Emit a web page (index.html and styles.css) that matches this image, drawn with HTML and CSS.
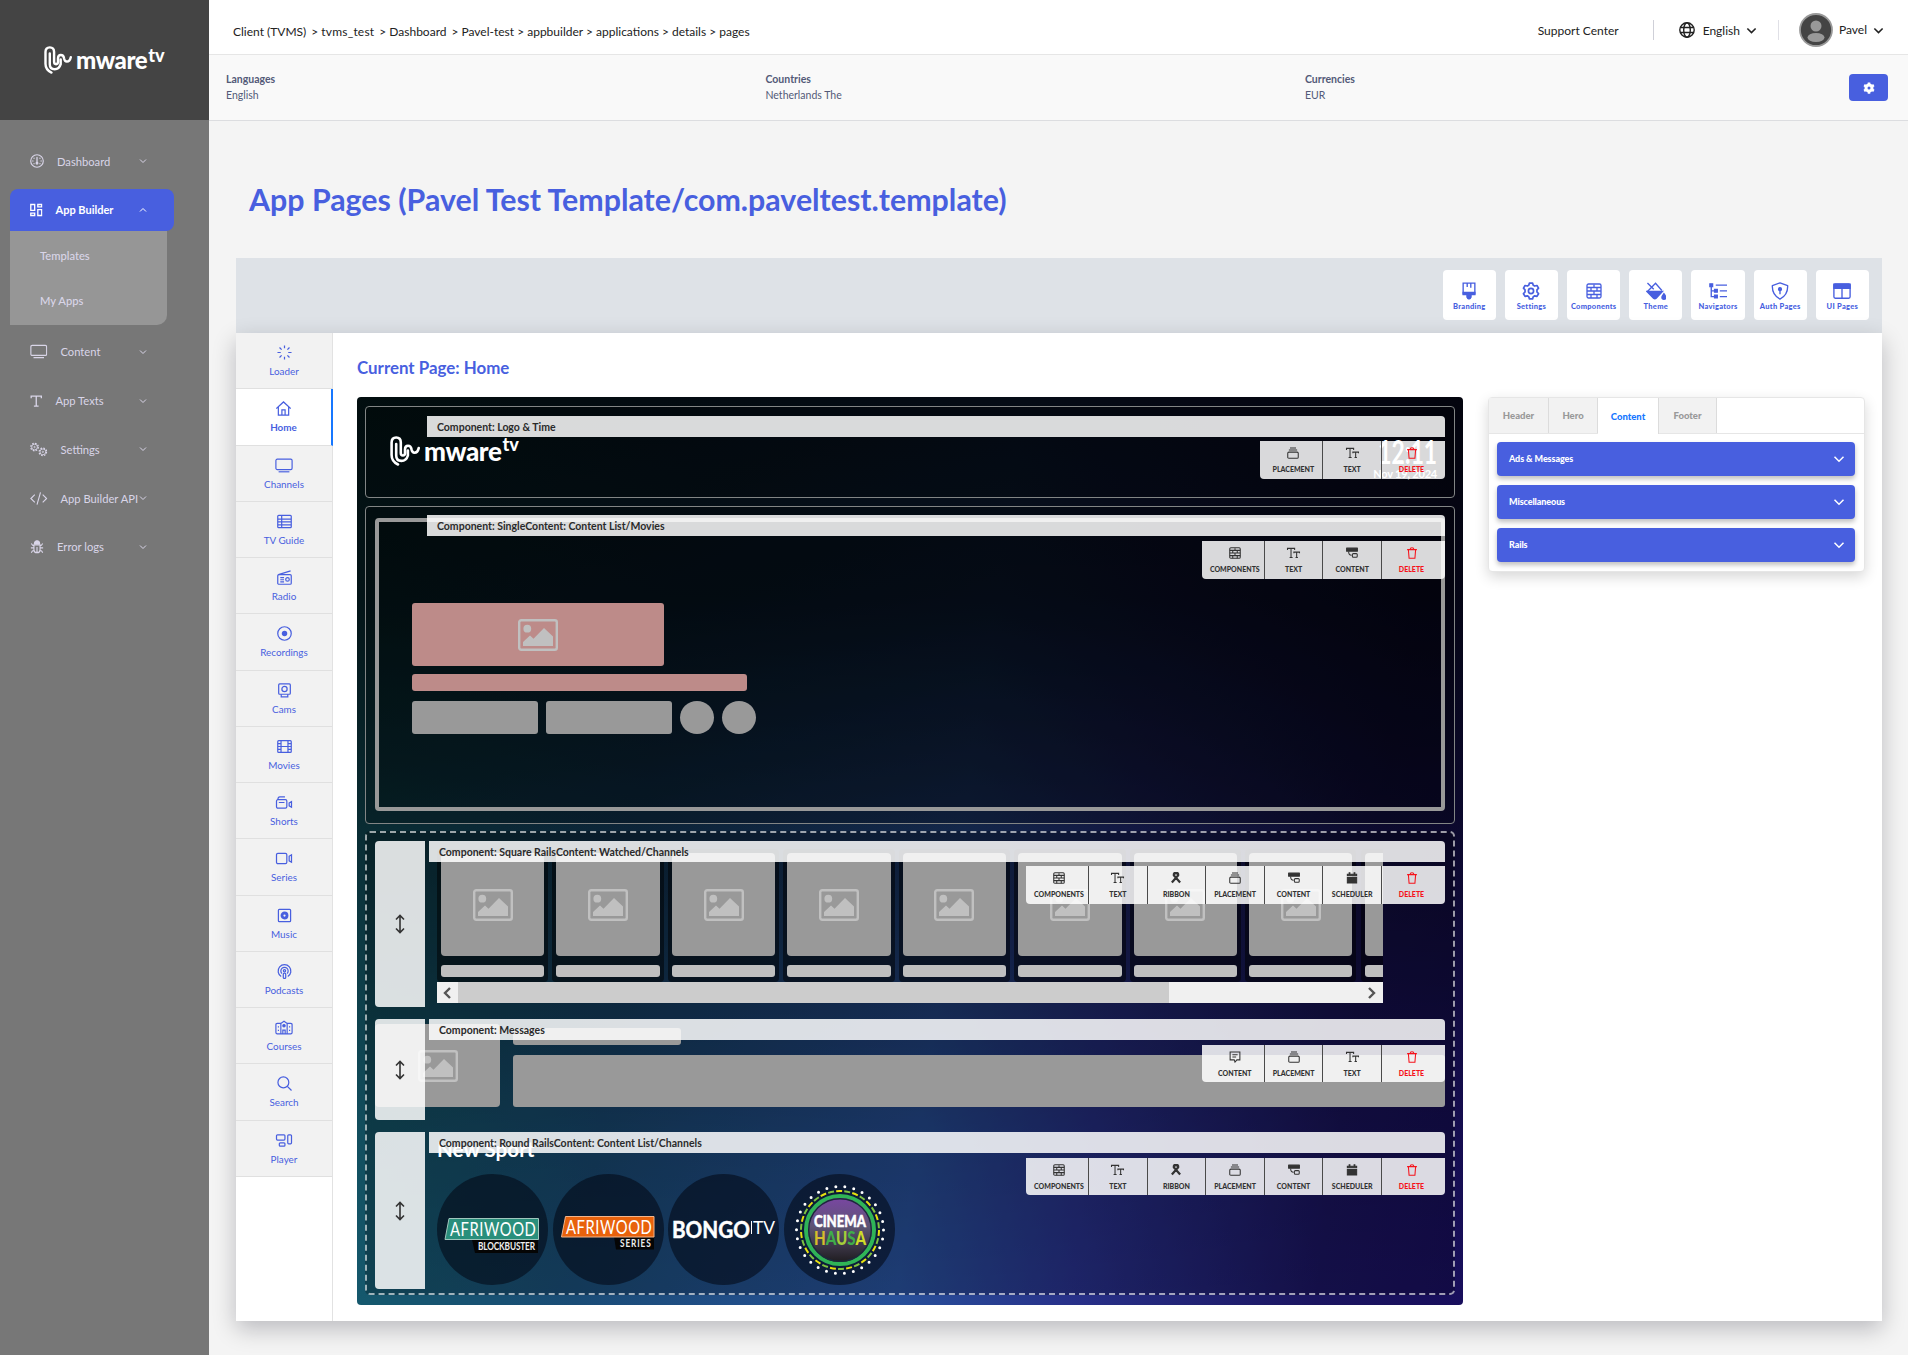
FILE: index.html
```html
<!DOCTYPE html>
<html lang="en">
<head>
<meta charset="utf-8">
<title>App Pages</title>
<link rel="stylesheet" href="styles.css">
</head>
<body>
<svg class="sprite" xmlns="http://www.w3.org/2000/svg">
  <symbol id="down" viewBox="0 0 16 16"><path d="M2 5l6 6 6-6"/></symbol>
  <symbol id="up" viewBox="0 0 16 16"><path d="M2 11l6-6 6 6"/></symbol>
  <symbol id="gauge" viewBox="0 0 16 16"><circle cx="8" cy="8" r="7.200"/><path d="M8 4v6M4.600 4.800v.1M11.400 4.800v.1M3.300 8v.1M12.700 8v.1M4.600 11v.1M11.400 11v.1" stroke-linecap="round" stroke-width="1.500"/><circle cx="8" cy="10.500" r="1" class="fill"/></symbol>
  <symbol id="grid" viewBox="0 0 16 16"><path d="M1 1h5v7.500h-5zM10 1h5v3h-5zM1 12h5v3h-5zM10 7.500h5v7.500h-5z"/></symbol>
  <symbol id="tv" viewBox="0 0 20 16"><rect x="1" y="1" width="18" height="11.500" rx="1.500"/><path d="M4 15h12"/></symbol>
  <symbol id="tee" viewBox="0 0 16 16"><path d="M1.500 4.500v-2.800h13v2.800M8 2v12.500M5 14.500h6"/></symbol>
  <symbol id="gear" viewBox="0 0 16 16"><circle cx="8" cy="8" r="2.300"/><path d="M6.600 1h2.800l.6 1.900 1.300.7 2-.5 1.400 2.400-1.400 1.500v1.900l1.400 1.500-1.400 2.400-2-.5-1.300.8-.6 1.900h-2.800l-.6-1.900-1.300-.8-2 .5-1.400-2.400 1.400-1.500v-1.900l-1.400-1.500 1.400-2.400 2 .5 1.300-.7z" stroke-linejoin="round"/></symbol>
  <symbol id="gears" viewBox="0 0 20 16"><circle cx="5.200" cy="5.200" r="4.300" stroke-dasharray="1.900 1.480" stroke-width="1.400"/><circle cx="5.200" cy="5.200" r="3.300" stroke-width="1"/><circle cx="5.200" cy="5.200" r=".8" stroke-width=".9"/><circle cx="14.700" cy="10.700" r="4.300" stroke-dasharray="1.900 1.480" stroke-width="1.400"/><circle cx="14.700" cy="10.700" r="3.300" stroke-width="1"/><circle cx="14.700" cy="10.700" r=".8" stroke-width=".9"/></symbol>
  <symbol id="code" viewBox="0 0 20 16"><path d="M5.500 3.500l-4.500 4.500 4.500 4.500M14.500 3.500l4.500 4.500-4.500 4.500M12 1l-4 14"/></symbol>
  <symbol id="bug" viewBox="0 0 16 16"><path d="M4.500 5.500h7v5.500a3.500 3.500 0 0 1-7 0zM8 8v6M1 9h3.500M11.500 9h3.500M1.500 4l1.500 2 1.500.5M14.500 4l-1.500 2-1.500.5M1.500 14.500l1.200-2 2-.5M14.500 14.500l-1.200-2-2-.5"/><path d="M5 4.500a3 3.600 0 0 1 6 0z" class="fill"/></symbol>
  <symbol id="globe" viewBox="0 0 16 16"><circle cx="8" cy="8" r="7.200"/><ellipse cx="8" cy="8" rx="3.300" ry="7.200"/><path d="M1.200 5.500h13.600M1.200 10.500h13.600"/></symbol>
  <symbol id="cog" viewBox="0 0 16 16"><circle cx="8" cy="8" r="4" stroke-width="4"/><path d="M8 0.500v3M8 12.500v3M1.500 4.200l2.600 1.500M11.900 10.300l2.600 1.500M1.500 11.800l2.600-1.500M11.900 5.700l2.600-1.500" stroke-width="3.400"/></symbol>
  <symbol id="brush" viewBox="0 0 20 20"><path d="M3.500 1.200h13v11.800h-4.500v3.500a2 2 0 0 1-4 0v-3.500h-4.500zM8 1.500v4M12 1.500v5"/><path d="M3.500 11.500h13v2.500h-13zM8 13h4v4q-2 3.500-4 0z" class="fill"/></symbol>
  <symbol id="wall" viewBox="0 0 16 16"><rect x="1" y="1" width="14" height="14" rx="1.500"/><path d="M1 4.500h14M1 8h14M1 11.500h14M8 1.500v3M5 4.500v3.500M11 4.500v3.500M8 8v3.500M5 11.500v3.500M11 11.500v3.500"/></symbol>
  <symbol id="fill" viewBox="0 0 22 20"><path d="M1.500 1l7 7M1.500 10.500l9-9 7 8"/><path d="M.8 10.500h17.400l-7 7.500a2.500 2.500 0 0 1-3 0zM19.800 13q2.200 3 2.200 4a2.200 2.200 0 0 1-4.400 0q0-1 2.200-4z" class="fill"/></symbol>
  <symbol id="tree" viewBox="0 0 20 20"><path d="M2.500 3v13.200h5M2.500 9.800h5M7.500 3.500h12.500M12 9.800h8M12 16.200h8"/><path d="M1 2h3v3h-3zM6.200 8.300h3v3h-3zM6.200 14.700h3v3h-3z" class="fill"/></symbol>
  <symbol id="shield" viewBox="0 0 20 20"><path d="M10 1l8.500 3q.5 10.500-8.500 15q-9-4.500-8.500-15zM10 8v5.500" stroke-linejoin="round"/><circle cx="10" cy="8" r="1.600" class="fill"/></symbol>
  <symbol id="layout" viewBox="0 0 20 18"><rect x="1" y="1" width="18" height="16" rx="1.500"/><path d="M10 5v12"/><path d="M1 1.500h18v4.500h-18z" class="fill"/></symbol>
  <symbol id="spin" viewBox="0 0 16 16"><path d="M8 .5v3M8 12.500v3M.5 8h3.500M12 8h3.500M2.700 2.700l2.200 2.200M11.100 11.100l2.200 2.200M2.700 13.300l2.200-2.200M11.100 4.900l2.200-2.200"/></symbol>
  <symbol id="home" viewBox="0 0 16 16"><path d="M.3 8l7.700-7 7.700 7M2.500 6.500v8.500h11v-8.500M6.300 15v-5.500h3.400v5.500"/></symbol>
  <symbol id="guide" viewBox="0 0 16 16"><rect x=".8" y="1.500" width="14.400" height="13" rx="1"/><path d="M1 5.500h14M1 8.500h14M1 11.500h14M5 1.500v13"/></symbol>
  <symbol id="radio" viewBox="0 0 16 16"><rect x=".8" y="5" width="14.400" height="10.200" rx="1.200"/><path d="M1.500 5l13-4M3.500 8.200h4M3.500 10.400h4M3.500 12.600h4"/><circle cx="11.200" cy="10" r="1.900"/></symbol>
  <symbol id="rec" viewBox="0 0 16 16"><circle cx="8" cy="8" r="7.200"/><circle cx="8" cy="8" r="2.300" class="fill"/></symbol>
  <symbol id="cam" viewBox="0 0 16 16"><rect x="1.800" y="1" width="12.400" height="11" rx="1"/><circle cx="8" cy="6.500" r="2.800"/><path d="M4.500 12v2.800h7v-2.800"/></symbol>
  <symbol id="film" viewBox="0 0 16 16"><rect x=".8" y="1.800" width="14.400" height="12.400" rx="1"/><path d="M4.300 2v12M11.700 2v12M4.300 8h7.400M1 5h3.300M1 8h3.300M1 11h3.300M11.700 5h3.300M11.700 8h3.300M11.700 11h3.300"/></symbol>
  <symbol id="shorts" viewBox="0 0 18 16"><rect x="1" y="5" width="11" height="9" rx="1.500"/><path d="M2.500 5q0-3 2-3h5.500M3.500 8h6M14.500 8.500l2.500-1.500v6l-2.500-1.500z"/></symbol>
  <symbol id="series" viewBox="0 0 18 16"><rect x="1" y="2.500" width="11" height="11" rx="1.500"/><path d="M14.500 5.500l2.500-1.500v8l-2.500-1.500z"/></symbol>
  <symbol id="music" viewBox="0 0 16 16"><rect x="1.500" y="1.500" width="13" height="13" rx="1"/><circle cx="8" cy="8" r="2.700" stroke-width="3"/></symbol>
  <symbol id="pod" viewBox="0 0 16 16"><path d="M4.500 13.300a6.800 6.800 0 1 1 7 0M5.300 10.200a3.900 3.900 0 1 1 5.400 0"/><circle cx="8" cy="7.200" r="1.200"/><rect x="6.700" y="9.800" width="2.600" height="5.500" rx="1"/></symbol>
  <symbol id="school" viewBox="0 0 20 16"><path d="M6.500 3.500h-4q-1.500 0-1.500 1.500v8.500q0 1.500 1.500 1.500h15q1.500 0 1.500-1.500v-8.500q0-1.500-1.500-1.500h-4l-3.500-2.500zM6.500 3.500v11.500M13.500 3.500v11.500M8.700 15v-4h2.600v4M3.800 6.500v1.500M3.800 10.500v1.500M16.200 6.500v1.500M16.200 10.500v1.500"/><circle cx="10" cy="6" r="1.300" class="fill"/></symbol>
  <symbol id="search" viewBox="0 0 16 16"><circle cx="6.800" cy="6.800" r="5.800"/><path d="M11 11l4.500 4.500"/></symbol>
  <symbol id="player" viewBox="0 0 18 16"><rect x="1" y="2" width="9" height="5.500" rx="1"/><rect x="4" y="10.500" width="6" height="3.500" rx="1"/><rect x="13" y="2" width="4" height="9.500" rx="1"/></symbol>
  <symbol id="place" viewBox="0 0 16 16"><path d="M4 1.200h8M2.500 4h11"/><rect x="1" y="6.800" width="14" height="8.200" rx="1.500"/></symbol>
  <symbol id="text" viewBox="0 0 18 16"><path d="M1 4v-2.200h9.500v2.200M5.700 2v11.800M3.800 13.900h4M9.500 8.200v-1.400h7.500v1.400M13.200 7v6.900M11.700 13.900h3.200"/></symbol>
  <symbol id="ribbon" viewBox="0 0 16 16"><path d="M2.500 14l8.300-9.500q-.3-3-2.800-3t-2.800 3l8.300 9.500M5.200 4.500q-.6-3.500 2.800-3.500t2.800 3.500" stroke-width="3"/></symbol>
  <symbol id="content" viewBox="0 0 16 16"><path d="M.8 1.500h14.400v4h-14.400z" class="fill" stroke-linejoin="round"/><path d="M3.500 6q0 5 4 5"/><rect x="8.500" y="8.800" width="6.500" height="4.800" rx="1.300"/></symbol>
  <symbol id="cal" viewBox="0 0 16 16"><path d="M1.800 3h12.400v2h-12.400zM1.800 7.300h12.400v7.200h-12.400zM4.200 1h1v2h-1zM10.800 1h1v2h-1z" class="fill"/></symbol>
  <symbol id="chat" viewBox="0 0 16 16"><path d="M1.500 1.200h13v10.600h-4l-2.500 3-1-3h-5.500zM4.500 5h7M4.500 8h5"/></symbol>
  <symbol id="trash" viewBox="0 0 16 16"><path d="M1.500 3.500h13M5.500 3.300q0-2.300 2.500-2.300t2.500 2.300M3.200 3.800l.9 11.200h7.800l.9-11.200"/></symbol>
  <symbol id="updown" viewBox="0 0 12 20"><path d="M6 2v16M2 5.500l4-4 4 4M2 14.500l4 4 4-4"/></symbol>
  <symbol id="image" viewBox="0 0 40 32"><rect x="1.200" y="1.200" width="37.600" height="29.600" rx="2" stroke-width="2.400"/><path d="M5 27v-4l7-6.500 3.500 3.300 10.500-10.800 9 8.500v9.500z" class="fill" stroke="none"/><circle cx="9.300" cy="9.700" r="3.900" class="fill" stroke="none"/></symbol>
  <symbol id="logomark" viewBox="0 0 30 30"><path d="M8 28.500q-6.400-3-6.400-9.500v-12.500q0-5 4.600-5t4.600 5v10.500q0 2.500 2.100 2.500t2.100-2.500v-3.500q0-3.800 3-3.800t3.500 3.600q.6 3.400 3 3.400 3.200 0 4.200-4.600M6.200 8v11.500q0 5.400 5.200 5.400 4.900 0 6.500-5.400v-5" stroke-width="2.600" stroke-linecap="round"/></symbol>
</svg>

<aside class="sidebar">
  <div class="brand"><svg class="mark"><use href="#logomark"/></svg><span class="word">mware</span><sup>tv</sup></div>
  <nav class="menu">
    <a class="item"><svg class="i16"><use href="#gauge"/></svg><span>Dashboard</span><svg class="chev"><use href="#down"/></svg></a>
    <a class="item active"><svg class="i14"><use href="#grid"/></svg><span>App Builder</span><svg class="chev"><use href="#up"/></svg></a>
    <div class="submenu"><a>Templates</a><a>My Apps</a></div>
    <a class="item"><svg class="i20"><use href="#tv"/></svg><span>Content</span><svg class="chev"><use href="#down"/></svg></a>
    <a class="item"><svg class="i14"><use href="#tee"/></svg><span>App Texts</span><svg class="chev"><use href="#down"/></svg></a>
    <a class="item"><svg class="i20"><use href="#gears"/></svg><span>Settings</span><svg class="chev"><use href="#down"/></svg></a>
    <a class="item"><svg class="i20"><use href="#code"/></svg><span>App Builder API</span><svg class="chev"><use href="#down"/></svg></a>
    <a class="item"><svg class="i16"><use href="#bug"/></svg><span>Error logs</span><svg class="chev"><use href="#down"/></svg></a>
  </nav>
</aside>

<main class="main">
  <header class="topbar">
    <div class="crumbs"><span>Client (TVMS)</span><i>&gt;</i><span class="loose">tvms_test</span><i>&gt;</i><span>Dashboard</span><i>&gt;</i><span>Pavel-test &gt; appbuilder &gt; applications &gt; details &gt; pages</span></div>
    <div class="account">
      <span class="support">Support Center</span>
      <div class="lang"><svg class="globe"><use href="#globe"/></svg><span>English</span><svg class="caret"><use href="#down"/></svg></div>
      <div class="user"><svg class="avatar" viewBox="0 0 34 34"><circle cx="17" cy="17" r="16" fill="#444" stroke="#999" stroke-width="1.800"/><circle cx="17" cy="13" r="5.500" fill="#999"/><ellipse cx="17" cy="24.500" rx="8.500" ry="4.500" fill="#999"/></svg><span>Pavel</span><svg class="caret"><use href="#down"/></svg></div>
    </div>
  </header>
  <section class="infobar">
    <dl><dt>Languages</dt><dd>English</dd></dl>
    <dl><dt>Countries</dt><dd>Netherlands The</dd></dl>
    <dl><dt>Currencies</dt><dd>EUR</dd></dl>
    <button class="gearbtn"><svg><use href="#cog"/></svg></button>
  </section>

  <h1>App Pages (Pavel Test Template/com.paveltest.template)</h1>

  <div class="toolbar">
    <a><svg><use href="#brush"/></svg><span>Branding</span></a>
    <a><svg><use href="#gear"/></svg><span>Settings</span></a>
    <a><svg class="sm"><use href="#wall"/></svg><span>Components</span></a>
    <a><svg class="wide"><use href="#fill"/></svg><span>Theme</span></a>
    <a><svg><use href="#tree"/></svg><span>Navigators</span></a>
    <a><svg><use href="#shield"/></svg><span>Auth Pages</span></a>
    <a><svg><use href="#layout"/></svg><span>UI Pages</span></a>
  </div>

  <div class="card">
    <nav class="pages">
      <a><svg><use href="#spin"/></svg><span>Loader</span></a>
      <a class="current"><svg><use href="#home"/></svg><span>Home</span></a>
      <a><svg class="w"><use href="#tv"/></svg><span>Channels</span></a>
      <a><svg><use href="#guide"/></svg><span>TV Guide</span></a>
      <a><svg><use href="#radio"/></svg><span>Radio</span></a>
      <a><svg><use href="#rec"/></svg><span>Recordings</span></a>
      <a><svg><use href="#cam"/></svg><span>Cams</span></a>
      <a><svg><use href="#film"/></svg><span>Movies</span></a>
      <a><svg class="w"><use href="#shorts"/></svg><span>Shorts</span></a>
      <a><svg class="w"><use href="#series"/></svg><span>Series</span></a>
      <a><svg><use href="#music"/></svg><span>Music</span></a>
      <a><svg><use href="#pod"/></svg><span>Podcasts</span></a>
      <a><svg class="w"><use href="#school"/></svg><span>Courses</span></a>
      <a><svg><use href="#search"/></svg><span>Search</span></a>
      <a><svg class="w"><use href="#player"/></svg><span>Player</span></a>
    </nav>

    <section class="editor">
      <h2>Current Page: Home</h2>
      <div class="canvas">
        <div class="box head">
          <div class="applogo"><svg class="mark"><use href="#logomark"/></svg><span class="word">mware</span><sup>tv</sup></div>
          <div class="clock"><b>12:11</b><small>Nov 19, 2024</small></div>
          <div class="label">Component: Logo &amp; Time</div>
          <div class="tools"><a class="edge"><svg><use href="#place"/></svg><span>PLACEMENT</span></a><a><svg class="w"><use href="#text"/></svg><span>TEXT</span></a><a class="del"><svg><use href="#trash"/></svg><span>DELETE</span></a></div>
        </div>

        <div class="box hero">
          <div class="frame">
            <div class="poster"><svg class="img"><use href="#image"/></svg></div>
            <div class="line"></div>
            <div class="btns"><i></i><i></i><b></b><b></b></div>
          </div>
          <div class="label">Component: SingleContent: Content List/Movies</div>
          <div class="tools"><a class="edge"><svg><use href="#wall"/></svg><span>COMPONENTS</span></a><a><svg class="w"><use href="#text"/></svg><span>TEXT</span></a><a><svg><use href="#content"/></svg><span>CONTENT</span></a><a class="del"><svg><use href="#trash"/></svg><span>DELETE</span></a></div>
        </div>

        <div class="stack">
          <div class="row squares">
            <div class="rail">
              <div class="tile"><i><svg class="img"><use href="#image"/></svg></i><b></b></div>
              <div class="tile"><i><svg class="img"><use href="#image"/></svg></i><b></b></div>
              <div class="tile"><i><svg class="img"><use href="#image"/></svg></i><b></b></div>
              <div class="tile"><i><svg class="img"><use href="#image"/></svg></i><b></b></div>
              <div class="tile"><i><svg class="img"><use href="#image"/></svg></i><b></b></div>
              <div class="tile"><i><svg class="img"><use href="#image"/></svg></i><b></b></div>
              <div class="tile"><i><svg class="img"><use href="#image"/></svg></i><b></b></div>
              <div class="tile"><i><svg class="img"><use href="#image"/></svg></i><b></b></div>
              <div class="tile"><i></i><b></b></div>
            </div>
            <div class="scroll"><svg viewBox="0 0 10 12"><path d="M8 1l-5 5 5 5"/></svg><span></span><svg viewBox="0 0 10 12"><path d="M2 1l5 5-5 5"/></svg></div>
            <div class="handle"><svg><use href="#updown"/></svg></div>
            <div class="label">Component: Square RailsContent: Watched/Channels</div>
            <div class="tools"><a class="edge"><svg><use href="#wall"/></svg><span>COMPONENTS</span></a><a><svg class="w"><use href="#text"/></svg><span>TEXT</span></a><a><svg><use href="#ribbon"/></svg><span>RIBBON</span></a><a><svg><use href="#place"/></svg><span>PLACEMENT</span></a><a><svg><use href="#content"/></svg><span>CONTENT</span></a><a><svg><use href="#cal"/></svg><span>SCHEDULER</span></a><a class="del"><svg><use href="#trash"/></svg><span>DELETE</span></a></div>
          </div>

          <div class="row messages">
            <div class="thumb"><svg class="img"><use href="#image"/></svg></div>
            <div class="msg"><i></i><b></b></div>
            <div class="handle"><svg><use href="#updown"/></svg></div>
            <div class="label">Component: Messages</div>
            <div class="tools"><a class="edge"><svg><use href="#chat"/></svg><span>CONTENT</span></a><a><svg><use href="#place"/></svg><span>PLACEMENT</span></a><a><svg class="w"><use href="#text"/></svg><span>TEXT</span></a><a class="del"><svg><use href="#trash"/></svg><span>DELETE</span></a></div>
          </div>

          <div class="row rounds">
            <h3>New Sport</h3>
            <div class="channels">
              <svg viewBox="0 0 111 111"><circle cx="55.500" cy="55.500" r="55.500" class="disc"/><path d="M35 65.500h66v13.500h-63z" fill="#050505"/><path d="M12 44.500h89.500v21h-93.500z" fill="#2a8f7c" stroke="#9fc7bd"/><g transform="translate(13 61.500) scale(.78 1)"><text textLength="110" class="afri">AFRIWOOD</text></g><g transform="translate(41 76) scale(.75 1)"><text textLength="76" class="afrisub">BLOCKBUSTER</text></g></svg>
              <svg viewBox="0 0 111 111"><circle cx="55.500" cy="55.500" r="55.500" class="disc"/><path d="M61 62.500h40v13h-38z" fill="#050505"/><path d="M12.500 42.500h88.500v20.500h-92.500z" fill="#e8620c" stroke="#f3b58a"/><g transform="translate(13 59.500) scale(.78 1)"><text textLength="110" class="afri">AFRIWOOD</text></g><g transform="translate(67 73) scale(.75 1)"><text textLength="41" class="afrisub">SERIES</text></g></svg>
              <svg viewBox="0 0 111 111"><circle cx="55.500" cy="55.500" r="55.500" class="disc"/><text x="4" y="64" textLength="78" lengthAdjust="spacingAndGlyphs" class="bongo">BONGO</text><path d="M83.500 47v13" stroke="#fff" stroke-width="1"/><text x="85" y="60" textLength="22" lengthAdjust="spacingAndGlyphs" class="bongotv">TV</text></svg>
              <svg viewBox="0 0 111 111"><defs><linearGradient id="cin" x2="0" y2="1"><stop offset="0" stop-color="#7b45a5"/><stop offset=".45" stop-color="#5d5474"/><stop offset="1" stop-color="#1c1a1c"/></linearGradient></defs><circle cx="55.500" cy="55.500" r="55.500" class="disc"/><circle cx="56" cy="56" r="43.500" fill="none" stroke="#fff" stroke-width="3" stroke-linecap="round" stroke-dasharray="0 9.110"/><circle cx="56" cy="56" r="39" fill="none" stroke="#e6e010" stroke-width="2" stroke-dasharray="6 10.330"/><circle cx="56" cy="56" r="39" fill="none" stroke="#7fc241" stroke-width="2" stroke-dasharray="6 10.330" stroke-dashoffset="8.160"/><circle cx="56" cy="56" r="34" fill="url(#cin)" stroke="#2fb457" stroke-width="4"/><circle cx="56" cy="56" r="31.300" fill="none" stroke="#1c2a3c" stroke-width="1.400"/><text x="30" y="53" textLength="52" lengthAdjust="spacingAndGlyphs" class="cinema">CINEMA</text><text x="30" y="71" textLength="52" lengthAdjust="spacingAndGlyphs" class="hausa"><tspan fill="#d5bd2c">H</tspan><tspan fill="#3fae49">A</tspan><tspan fill="#a5ce39">U</tspan><tspan fill="#3fae49">S</tspan><tspan fill="#cfdc28">A</tspan></text></svg>
            </div>
            <div class="handle"><svg><use href="#updown"/></svg></div>
            <div class="label">Component: Round RailsContent: Content List/Channels</div>
            <div class="tools"><a class="edge"><svg><use href="#wall"/></svg><span>COMPONENTS</span></a><a><svg class="w"><use href="#text"/></svg><span>TEXT</span></a><a><svg><use href="#ribbon"/></svg><span>RIBBON</span></a><a><svg><use href="#place"/></svg><span>PLACEMENT</span></a><a><svg><use href="#content"/></svg><span>CONTENT</span></a><a><svg><use href="#cal"/></svg><span>SCHEDULER</span></a><a class="del"><svg><use href="#trash"/></svg><span>DELETE</span></a></div>
          </div>
        </div>
      </div>
    </section>

    <aside class="panel">
      <div class="tabs"><a>Header</a><a>Hero</a><a class="on">Content</a><a>Footer</a></div>
      <div class="acc"><span>Ads &amp; Messages</span><svg><use href="#down"/></svg></div>
      <div class="acc"><span>Miscellaneous</span><svg><use href="#down"/></svg></div>
      <div class="acc"><span>Rails</span><svg><use href="#down"/></svg></div>
    </aside>
  </div>
</main>
</body>
</html>
```
FILE: styles.css
```css
* { box-sizing: border-box; }
body { margin: 0; height: 1355px; display: flex; background: #f4f4f4; font-family: Lato, "Liberation Sans", sans-serif; color: #222; overflow: hidden; }
svg { display: block; fill: none; stroke: currentColor; flex: none; }
svg .fill, symbol .fill { fill: currentColor; }
.sprite { position: absolute; width: 0; height: 0; }
h1, h2, h3, dl, dt, dd { margin: 0; }

.sidebar { width: 209px; background: #777; color: #d9d5e8; }
.brand { height: 120px; background: #444; color: #fff; display: flex; align-items: center; padding-left: 44px; }
.mark { width: 28px; height: 28px; }
.word { font-size: 24px; font-weight: 900; letter-spacing: -.4px; margin-left: 4px; line-height: 24px; }
.brand sup, .applogo sup { font-size: 18px; font-weight: 900; line-height: 18px; align-self: flex-start; margin-left: 1px; }
.brand sup { margin-top: 46px; }
.menu { padding: 20px 0 0 10px; font-size: 11.200px; }
.item { position: relative; display: flex; align-items: center; height: 42px; padding-left: 20px; margin-bottom: 6.800px; width: 164px; white-space: nowrap; }
.item span { margin-left: 13px; }
.item .chev { position: absolute; left: 129px; width: 8px; height: 8px; stroke-width: 2; }
.i14 { width: 12.500px; height: 14px; stroke-width: 1.700; }
.i16 { width: 14px; height: 14px; stroke-width: 1.300; }
.i20 { width: 17.500px; height: 15px; stroke-width: 1.300; }
.item.active { background: #485fdf; color: #fff; border-radius: 8px 8px 8px 0; margin-bottom: 0; font-weight: 700; font-size: 11px; }
.submenu { width: 157px; height: 94px; background: #969696; border-radius: 0 0 10px 0; padding: 2px 0 2px 30px; display: flex; flex-direction: column; margin-bottom: 6px; font-weight: 500; }
.submenu a { height: 45px; line-height: 45px; }

.main { flex: 1; }
.topbar { height: 55px; background: #fff; border-bottom: 1px solid #e6e6e6; display: flex; justify-content: space-between; font-size: 12px; }
.crumbs { display: flex; padding: 0 0 0 24px; line-height: 64px; white-space: pre; }
.crumbs i { font-style: normal; width: 15px; padding-left: 2px; text-align: center; }
.crumbs .loose { letter-spacing: .2px; }
.account { display: flex; align-items: center; height: 60px; }
.support { padding-right: 34px; }
.lang { display: flex; align-items: center; height: 20px; border-left: 1px solid #cfd0d8; border-right: 1px solid #e0e0e6; padding: 0 21px 0 25px; }
.globe { width: 16px; height: 16px; margin-right: 8px; stroke-width: 1.400; }
.caret { width: 11px; height: 11px; stroke-width: 2.300; margin-left: 6px; }
.user { display: flex; align-items: center; padding: 0 24px 0 20px; }
.user span { padding-bottom: 2px; }
.avatar { width: 34px; height: 34px; margin-right: 6px; stroke: none; }
.infobar { position: relative; height: 66px; background: #f9f9f9; border-bottom: 1px solid #dcdde0; display: flex; padding: 17px 0 0 17px; font-size: 10.500px; line-height: 15.800px; color: #535a78; }
.infobar dl { width: 539.500px; }
dt { font-weight: 700; }
.gearbtn { position: absolute; right: 20px; top: 19px; width: 39px; height: 27px; border: 0; border-radius: 4px; background: #485fdf; color: #fff; display: grid; place-items: center; }
.gearbtn svg { width: 12px; height: 12px; }
h1 { height: 137px; padding: 56px 0 0 40px; font-size: 30.350px; line-height: 44px; color: #485fdf; font-weight: 700; white-space: nowrap; }

.toolbar { margin: 0 26px 0 27px; height: 75px; background: #dee2e7; display: flex; justify-content: flex-end; gap: 9px; padding: 12px 13px 0 0; }
.toolbar a { width: 53.200px; height: 50px; border-radius: 4px; background: #fff; color: #485fdf; display: flex; flex-direction: column; align-items: center; padding-top: 12px; font-size: 7.500px; font-weight: 900; letter-spacing: .28px; white-space: nowrap; }
.toolbar svg { width: 18px; height: 18px; margin-bottom: 1px; stroke-width: 1.500; }
.toolbar svg.sm { width: 16px; stroke-width: 1.300; }
.toolbar svg.wide { width: 20px; }
.toolbar span { line-height: 11px; }

.card { margin: 0 26px 0 27px; height: 988px; background: #fff; display: flex; position: relative; box-shadow: 0 8px 22px rgba(0,0,20,.24); }
.pages { width: 97px; border-right: 1px solid #e2e2e2; }
.pages a { display: flex; flex-direction: column; align-items: center; height: 56.270px; padding-top: 12px; background: #f2f2f2; border-bottom: 1px solid #e0e0e0; color: #485fdf; font-size: 9.900px; }
.pages svg { width: 15px; height: 15px; stroke-width: 1.300; margin-bottom: 4px; }
.pages svg.w { width: 18px; }
.pages span { line-height: 15px; }
.pages .current { background: #fff; border-right: 2px solid #1677ff; font-weight: 700; width: 97px; }
.editor { padding-left: 24px; }
h2 { height: 64px; line-height: 69px; font-size: 16.900px; color: #485fdf; font-weight: 700; }

.canvas { width: 1106px; height: 908px; border-radius: 4px; padding: 9px 8px; background: linear-gradient(180deg, rgba(0,2,3,.88), rgba(0,2,3,.8) 22%, rgba(0,2,3,.62) 40%, rgba(0,0,0,.38) 60%, rgba(0,0,0,.13) 82%, rgba(0,0,0,0)), linear-gradient(98deg, #126068, #1a4c76 28%, #28509a 54%, #28318a 68%, #1b1560 88%, #180e5c); }
.box { position: relative; border: 1px solid #828585; border-radius: 4px; background: rgba(0,0,0,.2); }
.head { height: 92px; margin-bottom: 8px; }
.hero { height: 317.500px; margin-bottom: 7.500px; padding: 11px 9px; }
.label { position: absolute; left: 61px; right: 9px; top: 9px; height: 21px; background: rgba(255,255,255,.85); border-radius: 0 4px 0 0; padding-left: 10px; font-size: 10.500px; line-height: 22px; font-weight: 700; color: #2a2a2a; white-space: nowrap; }
.hero .label { top: 8px; }
.tools { position: absolute; right: 9px; top: 34px; height: 38px; display: flex; background: rgba(255,255,255,.85); border-radius: 0 0 4px 4px; color: #333; }
.tools a { width: 58.600px; border-right: 1px solid #4a4a4a; display: flex; flex-direction: column; align-items: center; padding-top: 6px; font-size: 7px; font-weight: 900; }
.tools a.edge { width: 63px; padding-left: 4px; }
.tools a.del { width: 63px; border: 0; padding-right: 4px; color: #f5131b; }
.tools svg { width: 12px; height: 12px; stroke-width: 1.400; margin-bottom: 5px; }
.tools svg.w { width: 15px; }
.tools span { line-height: 10px; }
.applogo { position: absolute; left: 24px; top: 28px; display: flex; align-items: center; color: #fff; height: 32px; }
.applogo .mark { width: 30px; height: 30px; }
.applogo .word { font-size: 26px; }
.clock { position: absolute; right: 17px; top: 28px; text-align: right; color: #fff; }
.clock b { display: block; font-weight: 700; font-size: 33px; line-height: 32px; transform: scaleX(.69); transform-origin: right; }
.clock small { display: block; font-size: 11px; line-height: 12px; font-weight: 700; letter-spacing: -.2px; padding-top: 1px; }
.img { width: 40px; height: 32px; color: #c0c0c0; }
.frame { height: 293px; border: 4px solid #999; border-radius: 4px; background: rgba(0,0,0,.15); padding: 81px 0 0 33px; }
.poster { width: 252px; height: 63px; border-radius: 3px; background: #bd8b89; display: grid; place-items: center; margin-bottom: 8px; }
.line { width: 335px; height: 17px; border-radius: 3px; background: #bd8b89; margin-bottom: 10px; }
.btns { display: flex; gap: 8px; }
.btns i { width: 126px; height: 33px; border-radius: 3px; background: #999; }
.btns b { width: 34px; height: 33px; border-radius: 50%; background: #999; }

.stack { height: 464px; border: 2px dashed rgba(255,255,255,.6); border-radius: 5px; background: rgba(0,0,0,.24); padding: 8px; }
.row { position: relative; margin-bottom: 12px; }
.row .label { left: 54px; right: 0; top: 0; }
.row .tools { right: 0; top: 25px; }
.handle { position: absolute; left: 0; top: 0; bottom: 0; width: 50px; border-radius: 4px 0 0 4px; background: rgba(255,255,255,.85); display: grid; place-items: center; color: #333; }
.handle svg { width: 12px; height: 20px; stroke-width: 1.600; }
.squares { height: 166px; padding: 8px 0 0 62px; }
.rail { width: 946px; height: 133px; display: flex; gap: 4.400px; overflow: hidden; }
.tile { flex: none; width: 111.100px; padding: 4px; background: rgba(0,0,0,.5); border-radius: 4px; }
.tile i { height: 103px; border-radius: 4px; background: #999; display: grid; place-items: center; margin-bottom: 9px; }
.tile b { display: block; height: 12px; border-radius: 3px; background: #bfbfbf; }
.scroll { width: 946px; height: 21px; background: #f0f0f0; display: flex; align-items: center; }
.scroll svg { width: 10px; height: 12px; stroke: #555; stroke-width: 2.400; margin: 0 6px 0 5px; }
.scroll span { width: 711px; height: 21px; background: #ccc; margin-right: auto; }
.messages { height: 101px; display: flex; gap: 13px; padding-top: 5px; }
.thumb { width: 125px; height: 83px; border-radius: 4px; background: #999; display: grid; place-items: center; }
.msg { flex: 1; padding-top: 4px; }
.msg i { display: block; width: 168px; height: 17px; border-radius: 3px; background: #999; margin-bottom: 10px; }
.msg b { display: block; height: 52px; border-radius: 3px; background: #999; }
.messages .tools { height: 37px; top: 26px; }
.rounds { height: 157px; margin: 0; padding: 0 0 0 62px; }
.rounds .tools { height: 37px; top: 26px; }
h3 { height: 42px; font-size: 20.600px; line-height: 35px; color: #fff; }
.channels { display: flex; gap: 4.500px; }
.channels svg { width: 111px; height: 111px; stroke: none; }
.disc { fill: rgba(4,10,24,.6); }
.afri { font: 400 19px Lato, sans-serif; fill: #fff; }
.afrisub { font: 700 11px Lato, sans-serif; fill: #eee; }
.bongo { font: 700 23px Lato, sans-serif; fill: #fff; stroke: #fff; stroke-width: .5; }
.bongotv { font: 400 18px Lato, sans-serif; fill: #fff; }
.cinema { font: 900 17px Lato, sans-serif; fill: #fff; stroke: #fff; stroke-width: .5; }
.hausa { font: 900 19px Lato, sans-serif; }

.panel { position: absolute; left: 1252px; top: 64px; width: 377px; height: 175px; border: 1px solid #e6e6e6; border-radius: 4px; background: #fff; box-shadow: 0 5px 14px rgba(0,0,0,.16); }
.tabs { display: flex; height: 36px; border-bottom: 1px solid #e6e6e6; margin-bottom: 8px; }
.tabs a { border-right: 1px solid #dcdcdc; background: #f2f2f2; color: #999; font-size: 9.500px; font-weight: 900; display: grid; place-items: center; width: 58px; }
.tabs a:nth-child(1) { width: 60px; }
.tabs a:nth-child(2) { width: 49px; }
.tabs a.on { background: #fff; color: #1677ff; width: 61px; height: 36px; }
.acc { height: 34px; margin: 0 9px 9px 8px; border-radius: 4px; background: #485fdf; color: #fff; display: flex; justify-content: space-between; padding: 0 10px 0 12px; align-items: center; font-size: 9px; font-weight: 900; letter-spacing: -.1px; box-shadow: 0 3px 5px rgba(0,0,0,.25); }
.acc span { padding-bottom: 2px; }
.acc svg { width: 12px; height: 12px; stroke-width: 2; }
```
